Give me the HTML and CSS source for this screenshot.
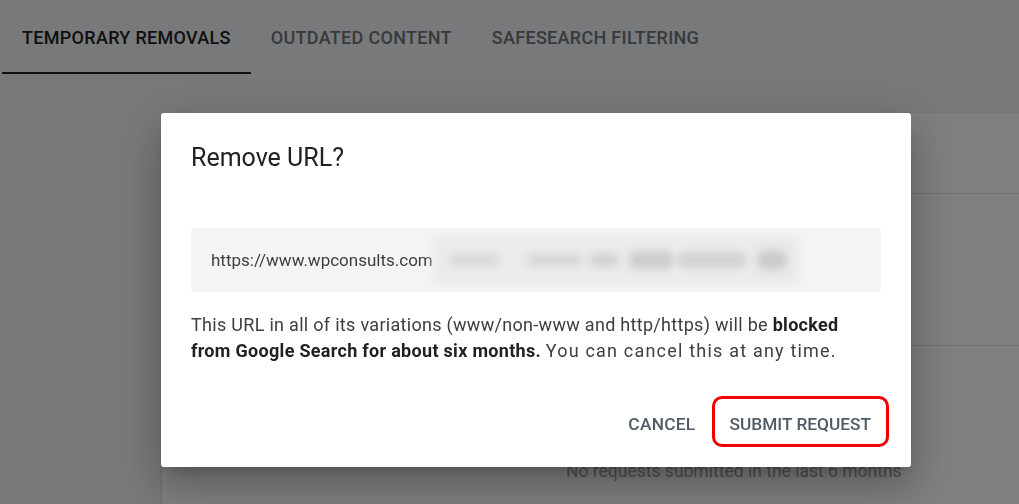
FILE: index.html
```html
<!DOCTYPE html>
<html lang="en">
<head>
<meta charset="utf-8">
<title>Removals</title>
<link rel="stylesheet" href="styles.css">
</head>
<body>
<nav class="tabs">
  <div class="tab active">Temporary removals</div>
  <div class="tab">Outdated content</div>
  <div class="tab">SafeSearch filtering</div>
</nav>
<main class="main">
  <section class="card">
    <div class="card-row head"></div>
    <div class="card-row body"></div>
    <div class="card-row empty">No requests submitted in the last 6 months</div>
  </section>
</main>
<div class="scrim">
  <div class="dialog">
    <h2 class="title">Remove URL?</h2>
    <div class="url-box">
      <span class="url">https://www.wpconsults.com</span>
      <span class="blur"><i class="b1"></i><i class="b2"></i><i class="b3"></i><i class="b4"></i><i class="b5"></i><i class="b6"></i></span>
    </div>
    <p class="desc">This URL in all of its variations (www/non-www and http/https) will be <b>blocked from Google Search for about six months.</b> <span class="tail">You can cancel this at any time.</span></p>
    <div class="actions">
      <button class="btn cancel">Cancel</button>
      <button class="btn primary">Submit request</button>
    </div>
  </div>
</div>
</body>
</html>
```

FILE: styles.css
```css
* { box-sizing: border-box; }
html, body { margin: 0; padding: 0; }
body {
  width: 1019px;
  height: 504px;
  overflow: hidden;
  background: #f1f3f4;
  font-family: Roboto, "Liberation Sans", sans-serif;
  color: #202124;
}
.tabs {
  display: flex;
  padding-left: 2px;
}
.tab {
  padding: 27px 20px 24px;
  line-height: 21px;
  font-size: 18px;
  font-weight: 500;
  text-transform: uppercase;
  letter-spacing: 0.3px;
  color: #6f7378;
  border-bottom: 2px solid transparent;
}
.tab.active {
  color: #202124;
  border-bottom-color: #202124;
}
.main {
  padding: 39px 0 0 162px;
}
.card {
  background: #ffffff;
  width: 900px;
  box-shadow: 0 1px 2px rgba(60,64,67,.3);
}
.card-row { border-bottom: 1px solid #dadce0; }
.card-row.head { height: 81px; }
.card-row.body { height: 152px; }
.card-row.empty {
  border-bottom: none;
  padding: 113px 0 40px 404px;
  font-size: 17.5px;
  line-height: 24px;
  color: #9aa0a6;
}
.scrim {
  position: fixed;
  inset: 0;
  background: rgba(0,0,0,0.5);
  display: flex;
  align-items: flex-start;
  padding: 113px 0 0 161px;
}
.dialog {
  width: 750px;
  height: 354px;
  background: #fff;
  border-radius: 3px;
  padding: 28px 30px 0;
  box-shadow: 0 11px 15px -7px rgba(0,0,0,.2), 0 24px 38px 3px rgba(0,0,0,.14), 0 9px 46px 8px rgba(0,0,0,.12);
}
.title {
  margin: 0;
  font-size: 25px;
  line-height: 34px;
  font-weight: 400;
  color: #202124;
}
.url-box {
  margin-top: 53px;
  height: 64px;
  background: #f4f4f4;
  border-radius: 5px;
  display: flex;
  align-items: center;
  padding-left: 20px;
}
.url {
  font-size: 17px;
  color: #3c4043;
}
.blur {
  width: 367px;
  height: 50px;
  background: #ebebeb;
  display: flex;
  align-items: center;
  filter: blur(4px);
}
.blur i { display: block; height: 14px; border-radius: 7px; background: #d3d3d3; }
.blur .b1 { width: 50px; margin-left: 16px; height: 12px; background: #d8d8d8; }
.blur .b2 { width: 56px; margin-left: 28px; height: 12px; background: #d6d6d6; }
.blur .b3 { width: 30px; margin-left: 6px; height: 14px; background: #d2d2d2; }
.blur .b4 { width: 44px; margin-left: 10px; height: 18px; background: #cccccc; }
.blur .b5 { width: 70px; margin-left: 4px; height: 16px; background: #d2d2d2; }
.blur .b6 { width: 30px; margin-left: 10px; height: 20px; background: #cbcbcb; }
.desc {
  margin: 20px 0 0;
  font-size: 18px;
  letter-spacing: 0.3px;
  line-height: 26px;
  color: #3c4043;
}
.desc b { color: #202124; font-weight: 700; }
.desc .tail { letter-spacing: 1.2px; }
.actions {
  margin-top: 32px;
  display: flex;
  justify-content: flex-end;
  align-items: center;
  gap: 13px;
  margin-right: -8px;
}
.btn {
  font-family: Roboto, "Liberation Sans", sans-serif;
  font-size: 17.3px;
  font-weight: 500;
  letter-spacing: 0;
  text-transform: uppercase;
  color: #4f5b66;
  background: none;
  border: 3px solid transparent;
  border-radius: 10px;
  height: 51px;
  padding: 4px 15px 0;
  line-height: 20px;
  cursor: pointer;
}
.btn.cancel { padding-right: 0; padding-left: 0; letter-spacing: 0.3px; }
.btn.primary { border-color: #f00000; }
```
